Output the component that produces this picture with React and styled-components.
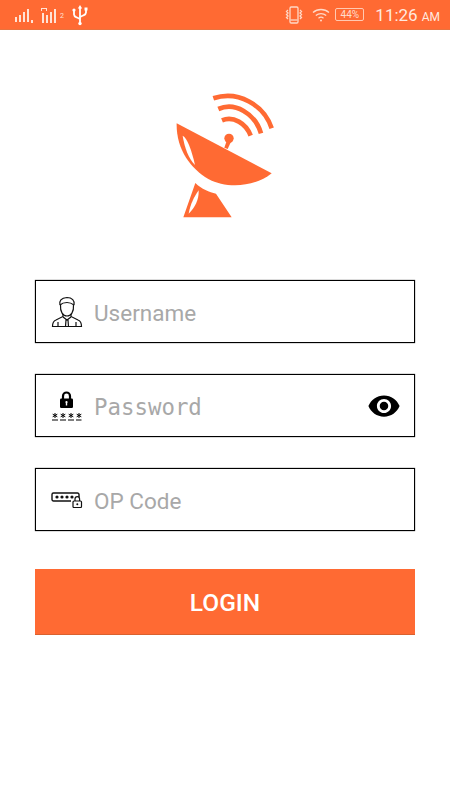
import React from "react";
import styled, { createGlobalStyle } from "styled-components";

const ORANGE = "#ff6a33";

const GlobalStyle = createGlobalStyle`
  html, body {
    margin: 0;
    padding: 0;
    background: #fff;
  }
  * {
    box-sizing: border-box;
  }
`;

const Page = styled.div`
  width: 450px;
  height: 800px;
  background: #fff;
  display: flex;
  flex-direction: column;
  font-family: Roboto, "Liberation Sans", sans-serif;
  overflow: hidden;
`;

const StatusBar = styled.div`
  height: 30px;
  background: ${ORANGE};
  border-bottom: 1px solid #e8733f;
  display: flex;
  align-items: center;
  justify-content: space-between;
  padding: 0 10px 0 14px;
  color: #fff;
`;

const StatusGroup = styled.div`
  display: flex;
  align-items: center;
  gap: ${(p) => p.$gap}px;
`;

const Battery = styled.div`
  width: 29px;
  height: 13px;
  border: 1px solid #ffc9b2;
  border-radius: 2px;
  font-size: 10px;
  line-height: 11px;
  text-align: center;
  color: #ffdccd;
`;

const Clock = styled.div`
  font-size: 17px;
  color: #ffe9df;
  margin-left: 6px;
`;

const Meridiem = styled.span`
  font-size: 12px;
  margin-left: 4px;
`;

const SimBadge = styled.span`
  font-size: 7px;
  color: #ffe3d6;
  align-self: flex-end;
  margin: 0 1px 6px -6px;
`;

const VibrateSvg = styled.svg`
  margin-right: 4px;
`;

const LogoRow = styled.div`
  display: flex;
  justify-content: center;
  padding: 55px 5px 0 0;
  height: 250px;
`;

const Form = styled.form`
  display: flex;
  flex-direction: column;
  gap: 31px;
  padding: 0 35px;
`;

const Field = styled.div`
  height: 63px;
  border: 1px solid #000;
  box-shadow: 0 0 1px #333;
  display: flex;
  align-items: center;
  padding: 0 13px 0 15px;
`;

const IconSlot = styled.div`
  width: 32px;
  height: 36px;
  display: flex;
  align-items: center;
  justify-content: center;
  flex-shrink: 0;
  margin-right: 11px;
`;

const Placeholder = styled.span`
  flex: 1;
  color: #a8a8a8;
  font-family: ${(p) =>
    p.$mono ? '"DejaVu Sans Mono", monospace' : "Roboto, sans-serif"};
  font-size: ${(p) => (p.$mono ? 22.4 : 22.5)}px;
  padding-top: 2px;
`;

const LoginButton = styled.button`
  height: 66px;
  margin-top: 7px;
  border: 0;
  border-bottom: 1px solid #d9612f;
  background: ${ORANGE};
  color: #fff;
  font-family: Roboto, sans-serif;
  font-size: 24.5px;
  font-weight: 500;
  padding: 2px 0 0;
`;

const SignalIcon = () => (
  <svg width="20" height="16" viewBox="0 0 20 16" fill="#ffe3d6">
    <rect x="1" y="10" width="2" height="5" />
    <rect x="5" y="8" width="2" height="7" />
    <rect x="9" y="5" width="2" height="10" />
    <rect x="13" y="2" width="2" height="13" />
    <rect x="17" y="13" width="2" height="3" />
  </svg>
);

const RoamingSignalIcon = () => (
  <svg width="20" height="20" viewBox="0 0 20 20" fill="#ffe3d6">
    <path d="M1 3h6v3H6V4H2v2H1z" />
    <rect x="2" y="8" width="2" height="10" />
    <rect x="6" y="10" width="2" height="8" />
    <rect x="10" y="7" width="2" height="11" />
    <rect x="14" y="4" width="2" height="14" />
  </svg>
);

const UsbIcon = () => (
  <svg width="18" height="22" viewBox="0 0 18 22" fill="none" stroke="#fff" strokeWidth="1.8">
    <path d="M9 21V4" />
    <path d="M9 1 6.8 4.5h4.4z" fill="#fff" stroke="none" />
    <path d="M3 7v3.5c0 1.5 1 2.2 2.500 2.800L9 15" />
    <path d="M15 6v2.500c0 1.500-1 2.200-2.500 2.800L9 13" />
    <circle cx="3" cy="6" r="1.600" fill="#fff" stroke="none" />
    <rect x="13.500" y="3.500" width="3" height="3" fill="#fff" stroke="none" />
    <circle cx="9" cy="19.500" r="1.700" fill="#fff" stroke="none" />
  </svg>
);

const VibrateIcon = () => (
  <VibrateSvg width="18" height="18" viewBox="0 0 17 18" fill="none" stroke="#ffd9c8" strokeWidth="1.300">
    <rect x="4.500" y="1" width="8" height="16" rx="1.200" />
    <path d="M5 14h7" />
    <path d="M2.500 4 1 5.500l1.500 1.500L1 8.500 2.500 10 1 11.500 2.500 13" />
    <path d="M14.500 4 16 5.500 14.500 7 16 8.500 14.500 10 16 11.500 14.500 13" />
  </VibrateSvg>
);

const WifiIcon = () => (
  <svg width="18" height="14" viewBox="0 0 18 14" fill="none" stroke="#ffd9c8" strokeWidth="1.300">
    <path d="M1 4.500c4.500-4 11.500-4 16 0" />
    <path d="M3.800 7.500c3-2.600 7.400-2.600 10.400 0" />
    <path d="M6.500 10.200c1.500-1.200 3.500-1.200 5 0" />
    <circle cx="9" cy="12.600" r="1" fill="#ffd9c8" stroke="none" />
  </svg>
);

const DishLogo = () => (
  <svg width="125" height="140" viewBox="0 0 375 420">
    <g fill="none" stroke={ORANGE} strokeWidth="14">
      <path d="M160 40C235 15 312 60 335 130" />
      <path d="M175 72C225 50 285 85 303 145" />
      <path d="M186 106C220 92 258 115 272 152" />
    </g>
    <circle cx="207" cy="160" r="14" fill={ORANGE} />
    <path d="M201 165 213 170 203 192 193 188z" fill={ORANGE} />
    <path d="M50 115 335 265C285 306 200 312 145 282 90 250 48 190 50 115z" fill={ORANGE} />
    <path d="M68 152C82 160 94 192 105 240 86 220 74 190 68 152z" fill="#fff" />
    <path d="M106 294C125 312 148 322 168 326L215 397H70z" fill={ORANGE} />
    <path d="M116 316C117 345 105 368 86 386 91 358 102 336 116 316z" fill="#fff" />
  </svg>
);

const UserIcon = () => (
  <svg width="32" height="32" viewBox="0 0 32 32" fill="none" stroke="#111" strokeWidth="1.200">
    <path d="M9 9c-1-4 1-7 7-7.500 5 0 8 3 7 7.500" />
    <path d="M9 9c2-2 4-2.500 7-2.500 3 0 5 1 7 2.500" />
    <path d="M9.500 9c-.5 7 2.500 11 6.500 11s7-4 6.500-11" />
    <path d="M12 18v2.500L5 24c-2.500 1-3.500 3-3.500 6.500h29c0-3.500-1-5.500-3.500-6.500l-7-3.500V18" />
    <path d="m12 21 4 3 4-3" />
    <path d="M15 24h2l.5 6.500h-3z" />
    <path d="M7 26v4.500M25 26v4.500" />
  </svg>
);

const Asterisk = ({ x }) => (
  <path
    d={`M${x} 25v5M${x - 2.3} 26.200l4.600 2.600M${x + 2.300} 26.200l-4.600 2.600`}
    fill="none"
    stroke="#000"
    strokeWidth="1"
  />
);

const LockIcon = () => (
  <svg width="32" height="36" viewBox="0 0 32 36">
    <path d="M12 11V8a3.500 3.500 0 0 1 7 0v3" fill="none" stroke="#000" strokeWidth="2.200" />
    <rect x="9" y="10.500" width="13" height="9.500" rx="1.200" fill="#000" />
    <rect x="14.800" y="14" width="1.400" height="3.500" fill="#fff" />
    <circle cx="15.500" cy="14" r="1.100" fill="#fff" />
    <Asterisk x={4} />
    <Asterisk x={12} />
    <Asterisk x={20} />
    <Asterisk x={28} />
    <path d="M1 32h29.500" stroke="#000" strokeWidth="1.200" strokeDasharray="6 2" />
  </svg>
);

const CodeIcon = () => (
  <svg width="32" height="16" viewBox="0 0 32 16" fill="none" stroke="#111" strokeWidth="1.200">
    <path d="M20 9H2.500A1.500 1.500 0 0 1 1 7.500v-5A1.500 1.500 0 0 1 2.500 1h24A1.500 1.500 0 0 1 28 2.500V5" strokeWidth="1.400" />
    <circle cx="6" cy="5" r="1.600" fill="#111" stroke="none" />
    <circle cx="11" cy="5" r="1.600" fill="#111" stroke="none" />
    <circle cx="16" cy="5" r="1.600" fill="#111" stroke="none" />
    <circle cx="21" cy="5" r="1.600" fill="#111" stroke="none" />
    <rect x="22" y="9" width="8.500" height="6.500" rx="1" />
    <path d="M24 9V7a2.300 2.300 0 0 1 4.600 0v2" />
    <circle cx="26.300" cy="12.200" r="1" fill="#111" stroke="none" />
  </svg>
);

const EyeIcon = () => (
  <svg width="34" height="34" viewBox="0 0 24 24" fill="#000">
    <path d="M12 4.500C7 4.500 2.730 7.610 1 12c1.730 4.390 6 7.500 11 7.500s9.270-3.110 11-7.500c-1.730-4.390-6-7.500-11-7.500zM12 17c-2.760 0-5-2.240-5-5s2.240-5 5-5 5 2.240 5 5-2.240 5-5 5zm0-8c-1.660 0-3 1.340-3 3s1.340 3 3 3 3-1.340 3-3-1.340-3-3-3z" />
  </svg>
);

const App = () => {
  const handleSubmit = (e) => {
    e.preventDefault();
  };

  return (
    <Page>
      <GlobalStyle />
      <StatusBar>
        <StatusGroup $gap={6}>
          <SignalIcon />
          <RoamingSignalIcon />
          <SimBadge>2</SimBadge>
          <UsbIcon />
        </StatusGroup>
        <StatusGroup $gap={5}>
          <VibrateIcon />
          <WifiIcon />
          <Battery>44%</Battery>
          <Clock>
            11:26<Meridiem>AM</Meridiem>
          </Clock>
        </StatusGroup>
      </StatusBar>
      <LogoRow>
        <DishLogo />
      </LogoRow>
      <Form onSubmit={handleSubmit}>
        <Field>
          <IconSlot>
            <UserIcon />
          </IconSlot>
          <Placeholder>Username</Placeholder>
        </Field>
        <Field>
          <IconSlot>
            <LockIcon />
          </IconSlot>
          <Placeholder $mono>Password</Placeholder>
          <EyeIcon />
        </Field>
        <Field>
          <IconSlot>
            <CodeIcon />
          </IconSlot>
          <Placeholder>OP Code</Placeholder>
        </Field>
        <LoginButton>LOGIN</LoginButton>
      </Form>
    </Page>
  );
};

export default App;
